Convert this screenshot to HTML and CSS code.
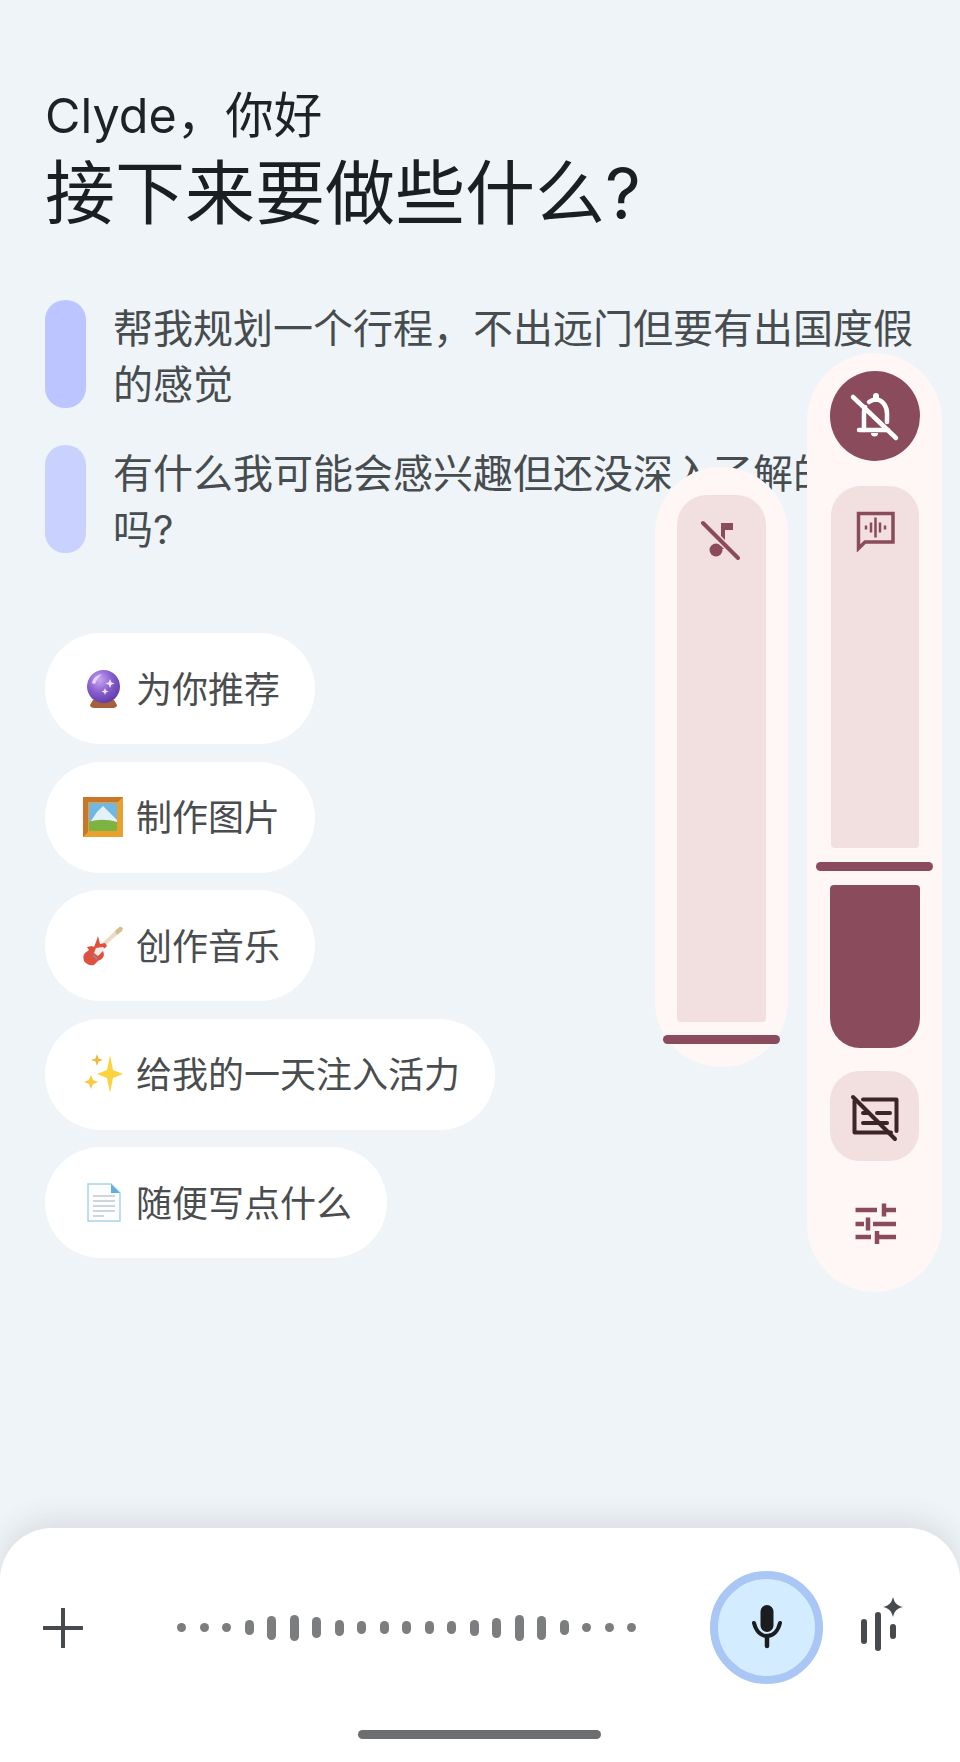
FILE: index.html
```html
<!DOCTYPE html>
<html lang="zh-CN">
<head>
<meta charset="utf-8">
<title>Gemini</title>
<link rel="stylesheet" href="styles.css">
</head>
<body>
<div class="page">
  <main class="content">
    <header class="head">
      <div class="greeting">Clyde，你好</div>
      <h1 class="title">接下来要做些什么?</h1>
    </header>
    <section class="suggestions">
      <div class="suggestion"><span class="mark mark-a"></span><p class="suggestion-text">帮我规划一个行程，不出远门但要有出国度假的感觉</p></div>
      <div class="suggestion"><span class="mark mark-b"></span><p class="suggestion-text">有什么我可能会感兴趣但还没深入了解的领域吗?</p></div>
    </section>
    <section class="chips">
      <div class="chip">
        <svg class="emoji" viewBox="0 0 40 40"><defs><radialGradient id="orb" cx="38%" cy="30%" r="75%"><stop offset="0" stop-color="#c9a6f2"/><stop offset=".5" stop-color="#8a5fd0"/><stop offset="1" stop-color="#5c3aa8"/></radialGradient></defs><path d="M10 31h21l3 5c0 2-2 3-4 3H11c-2 0-4-1-4-3z" fill="#a5613a"/><circle cx="20.500" cy="17.500" r="16.500" fill="url(#orb)"/><path d="M9 14c1-5 5-8 10-9-3 3-6 6-7 10z" fill="#e6d6fa"/><path d="M27 10l1.300 3.200 3.200 1.300-3.200 1.300L27 19l-1.300-3.200-3.200-1.300 3.200-1.300zM22 19l1 2.500 2.500 1-2.500 1-1 2.500-1-2.500-2.500-1 2.500-1z" fill="#f1e8ff"/></svg>
        <span class="chip-label">为你推荐</span>
      </div>
      <div class="chip">
        <svg class="emoji" viewBox="0 0 40 40"><rect width="40" height="40" fill="#e9a02c"/><path d="M0 0h40l-5 5H5v30l-5 5z" fill="#c9762a"/><rect x="6" y="6" width="28" height="28" fill="#6fb8e6"/><path d="M8 24l6-9 6-6 7 7 7 7v5H8z" fill="#e4f1fa"/><path d="M6 25c8-3 18-3 28 0v9H6z" fill="#7cb342"/></svg>
        <span class="chip-label">制作图片</span>
      </div>
      <div class="chip">
        <svg class="emoji" viewBox="0 0 40 40"><path d="M17 22L35 5" stroke="#e8dcc4" stroke-width="4" fill="none"/><path d="M32 5l5-4.500 3 1.500-1 3-5 4z" fill="#d9bd8c"/><path d="M15 10l2 8 5-1 2 3-4 4 1 5c-1 4-4 5-6 6l-4 4c-4 1-8-1-10-4-1-3-1-6 1-8l4-3-2-3 5-1 2 1 2-5z" fill="#e0503f"/><path d="M13 22l7-1 2 2-7 7-4-3z" fill="#f6eee6"/><path d="M10 29l4 4" stroke="#8a8a8a" stroke-width="2"/></svg>
        <span class="chip-label">创作音乐</span>
      </div>
      <div class="chip">
        <svg class="emoji" viewBox="0 0 40 40"><path d="M27 1l3 15 10 4-10 4-3 15-3-15-10-4 10-4z" fill="#fcd23f"/><path d="M14 0l1.500 4.500L20 6l-4.500 1.500L14 12l-1.500-4.500L8 6l4.500-1.500z" fill="#f3b63a"/><path d="M8 21l2 5 5 2-5 2-2 5-2-5-5-2 5-2z" fill="#fbc93a"/></svg>
        <span class="chip-label">给我的一天注入活力</span>
      </div>
      <div class="chip">
        <svg class="emoji" viewBox="0 0 40 40"><path d="M5 1h23l9 9v28H5z" fill="#fbfdff" stroke="#a9d3ea" stroke-width="1.500"/><path d="M28 1l9 9h-9z" fill="#5fb0dc"/><path d="M10 13h22M10 18h22M10 23h22M10 28h22M10 33h11" stroke="#c4c8cc" stroke-width="1.500"/></svg>
        <span class="chip-label">随便写点什么</span>
      </div>
    </section>
  </main>

  <footer class="sheet">
    <div class="composer">
      <svg class="plus" viewBox="0 0 40 40"><path d="M20 1v38M1 20h38" stroke="#474a4c" stroke-width="4" stroke-linecap="round"/></svg>
      <div class="wave">
        <i style="height:9px"></i><i style="height:9px"></i><i style="height:9px"></i><i style="height:15px"></i><i style="height:24px"></i><i style="height:26px"></i><i style="height:21px"></i><i style="height:16px"></i><i style="height:13px"></i><i style="height:13px"></i><i style="height:13px"></i><i style="height:13px"></i><i style="height:13px"></i><i style="height:16px"></i><i style="height:20px"></i><i style="height:26px"></i><i style="height:24px"></i><i style="height:15px"></i><i style="height:9px"></i><i style="height:9px"></i><i style="height:9px"></i>
      </div>
      <div class="mic">
        <svg class="mic-icon" viewBox="0 0 40 52"><rect x="13.500" y="3" width="13" height="27" rx="6.500" fill="#1a1c1e"/><path d="M7 21c2 8 7 13 13 13s11-5 13-13" fill="none" stroke="#1a1c1e" stroke-width="4" stroke-linecap="round"/><path d="M20 34v10" stroke="#1a1c1e" stroke-width="4.500" stroke-linecap="round"/></svg>
      </div>
      <svg class="spark" viewBox="0 0 44 60"><rect x="1" y="21" width="6" height="25" rx="3" fill="#474a4c"/><rect x="15" y="14" width="6" height="39" rx="3" fill="#474a4c"/><rect x="30" y="26" width="6" height="15" rx="3" fill="#474a4c"/><path d="M33 -1c1.500 6 4 8.500 10 10-6 1.500-8.500 4-10 10-1.500-6-4-8.500-10-10 6-1.500 8.500-4 10-10z" fill="#474a4c"/></svg>
    </div>
    <div class="home-bar"></div>
  </footer>

  <aside class="panel panel-music">
    <div class="track track-music">
      <svg class="icon-music" viewBox="0 0 40 40"><circle cx="16" cy="30" r="6.500" fill="#8a4b5c"/><path d="M23 3v26" stroke="#8a4b5c" stroke-width="4"/><rect x="21" y="3" width="12" height="7" fill="#8a4b5c"/><path d="M3 3l35 35" stroke="#f2dfe0" stroke-width="7"/><path d="M3 3l35 35" stroke="#8a4b5c" stroke-width="4" stroke-linecap="round"/></svg>
    </div>
    <div class="handle handle-music"></div>
  </aside>

  <aside class="panel panel-main">
    <div class="bell">
      <svg class="icon-bell" viewBox="0 0 56 56"><g fill="none" stroke="#fff" stroke-width="4.500" stroke-linecap="round"><path d="M12 42h29"/><path d="M17 42V24c0-2 .4-4 1-5"/><path d="M22 14c2-1.500 4.500-2.500 7-2.500 7 .5 11 7 11 14V34"/><path d="M6 9l43 41"/></g><path d="M29 11V8" stroke="#fff" stroke-width="6" stroke-linecap="round"/><path d="M24 45h7a3.500 3.500 0 0 1-7 0z" fill="#fff"/></svg>
    </div>
    <div class="track track-voice">
      <svg class="icon-voice" viewBox="0 0 40 44"><path d="M3.500 5.500H38V34H10l-6.500 6.500z" fill="none" stroke="#8a4b5c" stroke-width="3.500"/><path d="M11 17.500v4M16 14.500v10M20.500 9.500v20M25 14.500v10M30 17.500v4" stroke="#8a4b5c" stroke-width="2.500"/></svg>
    </div>
    <div class="handle handle-main"></div>
    <div class="fill"></div>
    <div class="tile">
      <svg class="icon-caption" viewBox="0 0 52 52"><g fill="none" stroke="#3d2429" stroke-width="4" stroke-linecap="round" stroke-linejoin="round"><path d="M14 9.500h33.500V41"/><path d="M5.500 11v31.500H42"/><path d="M28 23h13M14 23h5M14 33h24"/><path d="M4 7l42 42"/></g></svg>
    </div>
    <svg class="icon-tune" viewBox="0 0 44 44"><path d="M2.500 9H24M31 2.500v13M31 9h12M2.500 23H11M15 16.500v13M20 23h23M2.500 36H18M24 30v13M24 36h19" fill="none" stroke="#8a4b5c" stroke-width="4.500"/></svg>
  </aside>
</div>
</body>
</html>
```
FILE: styles.css
```css
* { box-sizing: border-box; }
html, body { margin: 0; padding: 0; }
body {
  background: #eff4f8;
  font-family: "Inter", "Noto Sans CJK SC", sans-serif;
}
.page {
  position: relative;
  width: 960px;
  height: 1762px;
  overflow: hidden;
  display: flex;
  flex-direction: column;
  background: #eff4f8;
}
.content {
  flex: 1;
  padding: 85px 0 0 45px;
}
.greeting {
  font-size: 48.5px;
  line-height: 62px;
  color: #1f2225;
}
.title {
  margin: 0;
  font-size: 70px;
  font-weight: 400;
  line-height: 94px;
  color: #1c1f22;
}
.suggestions {
  margin-top: 59px;
  display: flex;
  flex-direction: column;
  gap: 32px;
}
.suggestion {
  display: flex;
  gap: 27px;
  width: 880px;
}
.mark {
  flex: none;
  width: 41px;
  height: 108px;
  border-radius: 20px;
}
.mark-a { background: #bcc5ff; }
.mark-b { background: #c9d1ff; }
.suggestion-text {
  margin: 0;
  width: 802px;
  padding-top: 1px;
  font-size: 40px;
  line-height: 56px;
  color: #474c4f;
}
.chips {
  margin-top: 75px;
  display: flex;
  flex-direction: column;
  align-items: flex-start;
  gap: 17.5px;
}
.chip {
  display: flex;
  align-items: center;
  gap: 13px;
  height: 111px;
  padding: 0 35px 0 38px;
  border-radius: 56px;
  background: #fff;
  font-size: 36px;
  color: #4a4d4f;
}
.chip-label { padding-bottom: 4px; }
.emoji { width: 40px; height: 40px; flex: none; }

.sheet {
  flex: none;
  height: 234px;
  padding-top: 43px;
  border-radius: 52px 52px 0 0;
  background: #fff;
  box-shadow: 0 -8px 28px rgba(60, 70, 80, .13);
  position: relative;
}
.composer {
  display: flex;
  align-items: center;
  height: 113px;
  padding-left: 43px;
}
.plus { width: 40px; height: 40px; flex: none; }
.wave {
  display: flex;
  align-items: center;
  gap: 13.5px;
  margin-left: 94px;
  width: 459px;
  flex: none;
}
.wave i {
  display: block;
  flex: none;
  width: 9px;
  border-radius: 5px;
  background: #7b7d7f;
}
.mic {
  flex: none;
  width: 113px;
  height: 113px;
  margin-left: 74px;
  display: flex;
  align-items: center;
  justify-content: center;
  border-radius: 50%;
  background: #d3ecff;
  border: 8px solid #a9c6f5;
}
.mic-icon { width: 40px; height: 52px; }
.spark { width: 44px; height: 60px; margin-left: 37px; flex: none; overflow: visible; }
.home-bar {
  width: 243px;
  height: 9px;
  margin: 46px auto 0;
  transform: translateX(-1px);
  border-radius: 5px;
  background: #6c6e70;
}

.panel {
  position: absolute;
  display: flex;
  flex-direction: column;
  align-items: center;
  background: #fef7f6;
}
.panel-main {
  left: 807px;
  top: 353px;
  width: 135px;
  height: 939px;
  padding-top: 18px;
  border-radius: 68px;
}
.panel-music {
  left: 655px;
  top: 467px;
  width: 133px;
  height: 600px;
  padding-top: 28px;
  border-radius: 66px;
}
.bell {
  flex: none;
  width: 90px;
  height: 90px;
  display: flex;
  align-items: center;
  justify-content: center;
  border-radius: 50%;
  background: #8a4b5c;
}
.icon-bell { width: 56px; height: 56px; }
.track {
  flex: none;
  display: flex;
  flex-direction: column;
  align-items: center;
  border-radius: 30px 30px 4px 4px;
  background: #f2dfe0;
}
.track-voice {
  width: 88px;
  height: 362px;
  margin-top: 25px;
  padding-top: 22px;
}
.track-music {
  width: 89px;
  height: 527px;
  padding-top: 25px;
}
.icon-voice { width: 40px; height: 44px; }
.icon-music { width: 40px; height: 40px; transform: translateX(-2px); }
.handle {
  flex: none;
  width: 117px;
  height: 9px;
  border-radius: 5px;
  background: #8a4b5c;
}
.handle-main { margin-top: 14px; }
.handle-music { margin-top: 13px; }
.fill {
  flex: none;
  width: 90px;
  height: 163px;
  margin-top: 14px;
  border-radius: 4px 4px 30px 30px;
  background: #8a4b5c;
}
.tile {
  flex: none;
  width: 89px;
  height: 90px;
  margin-top: 23px;
  display: flex;
  align-items: center;
  justify-content: center;
  border-radius: 30px;
  background: #f2dfe0;
}
.icon-caption { width: 52px; height: 52px; }
.icon-tune { width: 44px; height: 44px; margin-top: 40px; flex: none; }
```
